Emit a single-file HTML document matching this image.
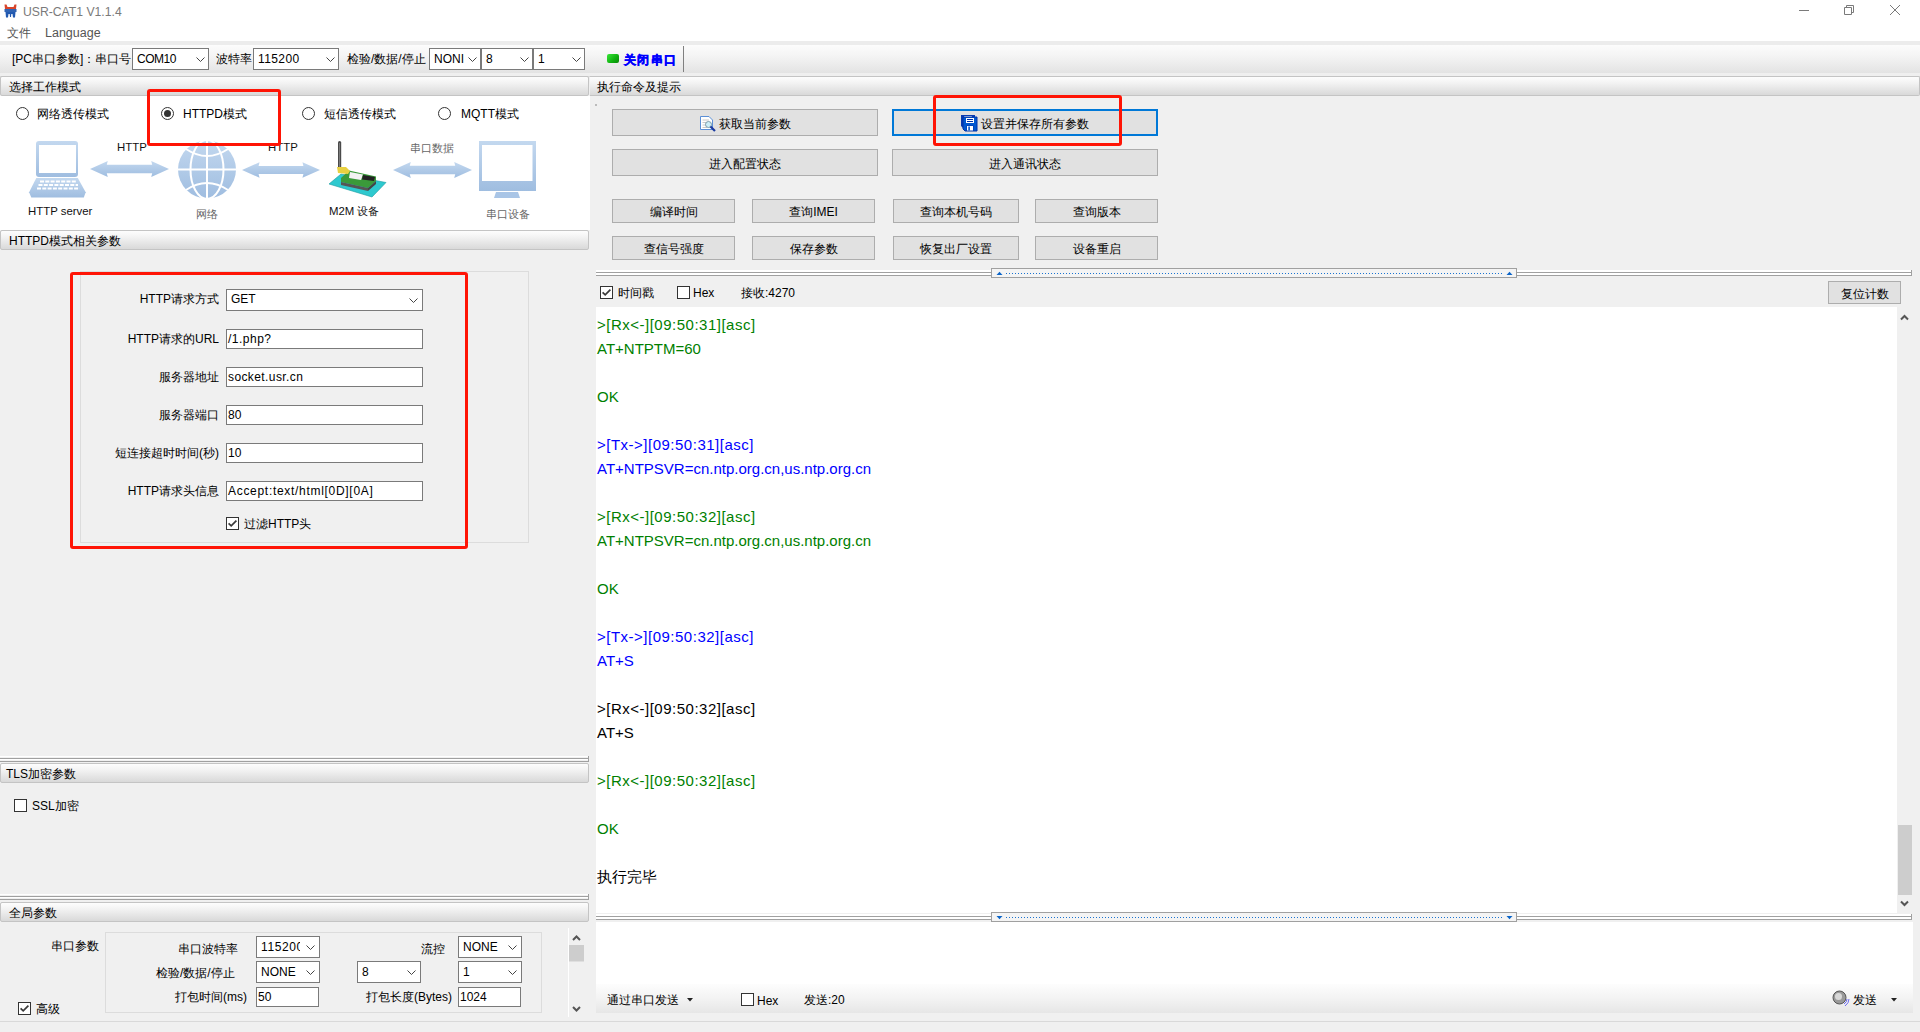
<!DOCTYPE html>
<html><head><meta charset="utf-8">
<style>
html,body{margin:0;padding:0;width:1920px;height:1032px;overflow:hidden;background:#f0f0f0;font-family:"Liberation Sans",sans-serif;}
.a{position:absolute;}
.t{position:absolute;font-size:12px;line-height:14px;white-space:nowrap;color:#000;}
.hdr{position:absolute;box-sizing:border-box;height:20px;border:1px solid #c4c4c4;border-radius:2px;background:linear-gradient(#fdfdfd,#f4f4f4 30%,#d9d9d9);}
.btn{position:absolute;box-sizing:border-box;border:1px solid #adadad;background:#e1e1e1;font-size:12px;line-height:14px;text-align:center;white-space:nowrap;}
.cb{position:absolute;box-sizing:border-box;border:1px solid #7a7a7a;background:#fff;}
.ip{position:absolute;box-sizing:border-box;border:1px solid #7a7a7a;background:#fff;}
.chk{position:absolute;box-sizing:border-box;width:13px;height:13px;border:1px solid #333;background:#fff;}
.rad{position:absolute;box-sizing:border-box;width:13px;height:13px;border:1.2px solid #333;border-radius:50%;background:#fff;}
.chev{position:absolute;width:9px;height:5px;}
.gb{position:absolute;box-sizing:border-box;border:1px solid #dcdcdc;}
.red{position:absolute;box-sizing:border-box;border:3px solid #ff1405;border-radius:3px;}
.log{position:absolute;left:597px;font-size:15px;line-height:24px;white-space:nowrap;}
</style></head><body>
<!-- title + menu -->
<div class="a" style="left:0;top:0;width:1920px;height:41px;background:#fff"></div>
<div class="a" style="left:0;top:41px;width:1920px;height:4px;background:#ececec"></div>
<!-- toolbar -->
<div class="a" style="left:0;top:45px;width:1920px;height:31px;background:#efefef"></div><div class="a" style="left:0;top:45px;width:1920px;height:28px;background:linear-gradient(#fcfcfc,#f4f4f4 40%,#e3e3e3)"></div>
<div class="a" style="left:0;top:76px;width:1920px;height:1px;background:#d8d8d8"></div>

<!-- title bar -->
<svg class="a" style="left:4px;top:4px" width="13" height="14" viewBox="0 0 13 14">
<path d="M0.5 0.5 L2.5 0.5 L3.5 3 L9.5 3 L10.5 0.5 L12.5 0.5 L12 5 L1 5 Z" fill="#d9452a"/>
<rect x="0.5" y="5" width="12" height="3" fill="#2f63b3"/>
<path d="M1.5 8 L11.5 8 L11 13.5 L9 13.5 L8.5 10 L7.3 10 L7 13 L6 13 L5.7 10 L4.5 10 L4 13.5 L2 13.5 Z" fill="#2259b0"/>
</svg>
<div class="t" style="left:23px;top:5px;font-size:12.2px;color:#7a7a7a">USR-CAT1 V1.1.4</div>
<div class="a" style="left:1799px;top:10px;width:10px;height:1px;background:#7a7a7a"></div>
<svg class="a" style="left:1844px;top:5px" width="10" height="10" viewBox="0 0 10 10"><path d="M0.5 2.5 H7.5 V9.5 H0.5 Z M2.5 2.5 V0.5 H9.5 V7.5 H7.5" fill="none" stroke="#7a7a7a"/></svg>
<svg class="a" style="left:1889px;top:4px" width="12" height="12" viewBox="0 0 12 12"><path d="M1 1 L11 11 M11 1 L1 11" stroke="#7a7a7a" stroke-width="1"/></svg>
<div class="t" style="left:7px;top:26px;color:#555">文件</div>
<div class="t" style="left:45px;top:26px;font-size:12.5px;color:#555">Language</div>
<!-- toolbar content -->
<div class="t" style="left:12px;top:52px">[PC串口参数]：串口号</div>
<div class="cb" style="left:132px;top:48px;width:77px;height:22px"></div>
<div class="t" style="left:137px;top:52px;color:#000;letter-spacing:-0.5px">COM10</div>
<div class="t" style="left:216px;top:52px">波特率</div>
<div class="cb" style="left:253px;top:48px;width:86px;height:22px"></div>
<div class="t" style="left:258px;top:52px;letter-spacing:0.4px">115200</div>
<div class="t" style="left:347px;top:52px">检验/数据/停止</div>
<div class="cb" style="left:429px;top:48px;width:52px;height:22px"></div>
<div class="t" style="left:434px;top:52px">NONI</div>
<div class="cb" style="left:481px;top:48px;width:52px;height:22px"></div>
<div class="t" style="left:486px;top:52px">8</div>
<div class="cb" style="left:533px;top:48px;width:52px;height:22px"></div>
<div class="t" style="left:538px;top:52px">1</div>
<div class="a" style="left:607px;top:54px;width:12px;height:9px;border-radius:2px;background:linear-gradient(135deg,#39e639,#0fb00f 60%,#0a8a0a)"></div>
<div class="t" style="left:624px;top:53px;color:#0000ff;font-weight:bold;letter-spacing:1.3px;-webkit-text-stroke:0.5px #0000ff">关闭串口</div>
<div class="a" style="left:683px;top:46px;width:1px;height:26px;background:#808080"></div>
<svg class="a" style="left:196px;top:57px" width="9" height="5" viewBox="0 0 9 5"><path d="M0.5 0.5 L4.5 4.5 L8.5 0.5" fill="none" stroke="#444" stroke-width="1"/></svg><svg class="a" style="left:326px;top:57px" width="9" height="5" viewBox="0 0 9 5"><path d="M0.5 0.5 L4.5 4.5 L8.5 0.5" fill="none" stroke="#444" stroke-width="1"/></svg><svg class="a" style="left:468px;top:57px" width="9" height="5" viewBox="0 0 9 5"><path d="M0.5 0.5 L4.5 4.5 L8.5 0.5" fill="none" stroke="#444" stroke-width="1"/></svg><svg class="a" style="left:520px;top:57px" width="9" height="5" viewBox="0 0 9 5"><path d="M0.5 0.5 L4.5 4.5 L8.5 0.5" fill="none" stroke="#444" stroke-width="1"/></svg><svg class="a" style="left:572px;top:57px" width="9" height="5" viewBox="0 0 9 5"><path d="M0.5 0.5 L4.5 4.5 L8.5 0.5" fill="none" stroke="#444" stroke-width="1"/></svg>
<!-- LEFT PANEL -->
<div class="hdr" style="left:0;top:76px;width:589px"></div>
<div class="t" style="left:9px;top:80px">选择工作模式</div>
<div class="a" style="left:0;top:96px;width:590px;height:134px;background:#fff"></div>
<div class="rad" style="left:16px;top:107px"></div>
<div class="t" style="left:37px;top:107px">网络透传模式</div>
<div class="rad" style="left:161px;top:107px"></div>
<div class="a" style="left:164px;top:110px;width:7px;height:7px;border-radius:50%;background:#333"></div>
<div class="t" style="left:183px;top:107px">HTTPD模式</div>
<div class="rad" style="left:302px;top:107px"></div>
<div class="t" style="left:324px;top:107px">短信透传模式</div>
<div class="rad" style="left:438px;top:107px"></div>
<div class="t" style="left:461px;top:107px">MQTT模式</div>
<!-- diagram -->
<svg class="a" style="left:0;top:96px" width="589" height="134" viewBox="0 96 589 134">
<defs>
<linearGradient id="lb" x1="0" y1="0" x2="0" y2="1"><stop offset="0" stop-color="#c3d8ef"/><stop offset="1" stop-color="#9fbde0"/></linearGradient>
<symbol id="arr" viewBox="0 0 80 16"><path d="M0 8 L18 0 L17 3.8 L63 3.8 L62 0 L80 8 L62 16 L63 12.2 L17 12.2 L18 16 Z"/></symbol>
</defs>
<!-- laptop -->
<rect x="36" y="141" width="42" height="36" rx="3" fill="url(#lb)"/>
<rect x="39" y="145" width="37" height="28" fill="#fff"/>
<path d="M36.3 178 L77.8 178 L85.7 192.2 L83.8 197.6 L31.3 197.6 L29.1 192.2 Z" fill="url(#lb)"/>
<g stroke="#fff" stroke-width="1.8" stroke-dasharray="4 1.3"><line x1="40" y1="181.5" x2="76" y2="181.5"/><line x1="38.5" y1="185" x2="78" y2="185"/><line x1="37" y1="188.5" x2="79.5" y2="188.5"/></g><rect x="46" y="177" width="22" height="1" fill="#fff"/>
<use href="#arr" x="90" y="161" width="79" height="16" fill="url(#lb)"/>
<!-- globe -->
<circle cx="207" cy="169.5" r="29" fill="url(#lb)"/>
<g fill="none" stroke="#fff" stroke-width="2">
<line x1="207" y1="140" x2="207" y2="199"/><line x1="178" y1="169.5" x2="236" y2="169.5"/>
<ellipse cx="207" cy="169.5" rx="16.5" ry="29.5"/>
<path d="M186 149 Q207 163 228 149"/><path d="M186 190 Q207 176 228 190"/>
</g>
<use href="#arr" x="242" y="162" width="78" height="16" fill="url(#lb)"/>
<!-- device -->
<path d="M329 184 L341 174 L386 182.5 L372 197 Z" fill="#2ec9cf" stroke="#1a9aa0" stroke-width="0.6"/>
<path d="M341 178 L349 170.5 L376 176.5 L376 181 L368 188 L341 182 Z" fill="#3a9a3a"/>
<path d="M341 182 L368 188 L368 191 L341 185 Z" fill="#555"/>
<path d="M368 188 L376 181 L376 184 L368 191 Z" fill="#444"/>
<path d="M350 172 L363 174.5 L361 180 L349 178 Z" fill="#f2f2f2"/>
<path d="M363 175 L375 177 L374 181 L362 179.5 Z" fill="#222"/>
<rect x="338" y="141" width="3.2" height="29" rx="1.6" fill="#4a4a4a"/><rect x="339.2" y="143" width="0.8" height="25" fill="#888"/>
<path d="M337 167 L346 167 L350 171 L348 174 L338 173 Z" fill="#e8d040"/>
<use href="#arr" x="393" y="162" width="79" height="16" fill="url(#lb)"/>
<!-- monitor -->
<rect x="479" y="141" width="57" height="50" fill="url(#lb)"/>
<rect x="482" y="145" width="50.5" height="36" fill="#fff"/>
<path d="M496 192 L518 192 L520 198 L494 198 Z" fill="#a9c5e6"/>
</svg>
<div class="t" style="left:117px;top:140px;font-size:11.4px;color:#111">HTTP</div>
<div class="t" style="left:268px;top:140px;font-size:11.4px;color:#111">HTTP</div>
<div class="t" style="left:410px;top:141px;font-size:11px;color:#666">串口数据</div>
<div class="t" style="left:28px;top:204px;font-size:11.4px;color:#111">HTTP server</div>
<div class="t" style="left:196px;top:207px;font-size:11px;color:#666">网络</div>
<div class="t" style="left:329px;top:204px;font-size:11.4px;color:#111">M2M 设备</div>
<div class="t" style="left:486px;top:207px;font-size:11px;color:#666">串口设备</div>
<div class="red" style="left:147px;top:89px;width:134px;height:57px"></div>
<!-- HTTPD params -->
<div class="hdr" style="left:0;top:230px;width:589px"></div>
<div class="t" style="left:9px;top:234px">HTTPD模式相关参数</div>
<div class="gb" style="left:80px;top:271px;width:449px;height:272px"></div>
<div class="t" style="right:1701px;top:292px">HTTP请求方式</div>
<div class="cb" style="left:226px;top:289px;width:197px;height:22px"></div>
<div class="t" style="left:231px;top:292px">GET</div>
<svg class="a" style="left:409px;top:298px" width="9" height="5" viewBox="0 0 9 5"><path d="M0.5 0.5 L4.5 4.5 L8.5 0.5" fill="none" stroke="#444" stroke-width="1"/></svg><div class="t" style="right:1701px;top:332px">HTTP请求的URL</div>
<div class="ip" style="left:226px;top:329px;width:197px;height:20px"></div>
<div class="t" style="left:228px;top:332px;letter-spacing:0.5px">/1.php?</div>
<div class="t" style="right:1701px;top:370px">服务器地址</div>
<div class="ip" style="left:226px;top:367px;width:197px;height:20px"></div>
<div class="t" style="left:228px;top:370px;letter-spacing:0.4px">socket.usr.cn</div>
<div class="t" style="right:1701px;top:408px">服务器端口</div>
<div class="ip" style="left:226px;top:405px;width:197px;height:20px"></div>
<div class="t" style="left:228px;top:408px">80</div>
<div class="t" style="right:1701px;top:446px">短连接超时时间(秒)</div>
<div class="ip" style="left:226px;top:443px;width:197px;height:20px"></div>
<div class="t" style="left:228px;top:446px">10</div>
<div class="t" style="right:1701px;top:484px">HTTP请求头信息</div>
<div class="ip" style="left:226px;top:481px;width:197px;height:20px"></div>
<div class="t" style="left:228px;top:484px;letter-spacing:0.7px">Accept:text/html[0D][0A]</div>

<div class="chk" style="left:226px;top:517px"></div>
<svg class="a" style="left:226px;top:517px" width="13" height="13"><path d="M2.6 6.3 L5.2 8.9 L10.4 3.6" fill="none" stroke="#3a3a3a" stroke-width="1.7"/></svg>
<div class="t" style="left:244px;top:517px">过滤HTTP头</div>
<div class="red" style="left:70px;top:272px;width:398px;height:277px"></div>
<!-- splitter 1 -->
<div class="a" style="left:0;top:756px;width:589px;height:1px;background:#fff"></div>
<div class="a" style="left:0;top:758px;width:589px;height:1px;background:#a0a0a0"></div>
<div class="a" style="left:0;top:759px;width:589px;height:1px;background:#fff"></div>
<div class="a" style="left:0;top:761px;width:589px;height:1px;background:#a0a0a0"></div>
<div class="a" style="left:588px;top:756px;width:1px;height:6px;background:#a0a0a0"></div>
<div class="hdr" style="left:0;top:763px;width:589px"></div>
<div class="t" style="left:6px;top:767px">TLS加密参数</div>
<div class="chk" style="left:14px;top:799px"></div>
<div class="t" style="left:32px;top:799px">SSL加密</div>
<!-- splitter 2 -->
<div class="a" style="left:0;top:894px;width:589px;height:1px;background:#fff"></div>
<div class="a" style="left:0;top:896px;width:589px;height:1px;background:#a0a0a0"></div>
<div class="a" style="left:0;top:897px;width:589px;height:1px;background:#fff"></div>
<div class="a" style="left:0;top:899px;width:589px;height:1px;background:#a0a0a0"></div>
<div class="a" style="left:588px;top:894px;width:1px;height:6px;background:#a0a0a0"></div>
<div class="hdr" style="left:0;top:902px;width:589px"></div>
<div class="t" style="left:9px;top:906px">全局参数</div>
<div class="t" style="left:51px;top:939px">串口参数</div>
<div class="gb" style="left:105px;top:932px;width:437px;height:81px"></div>
<div class="t" style="left:178px;top:942px">串口波特率</div>
<div class="cb" style="left:256px;top:936px;width:64px;height:22px"></div>
<div class="a" style="left:257px;top:937px;width:43px;height:20px;overflow:hidden"><div class="t" style="left:4px;top:3px;letter-spacing:0.6px">115200</div></div>
<div class="t" style="left:421px;top:942px">流控</div>
<div class="cb" style="left:458px;top:936px;width:64px;height:22px"></div>
<div class="t" style="left:463px;top:940px">NONE</div>
<div class="t" style="left:156px;top:966px">检验/数据/停止</div>
<div class="cb" style="left:256px;top:961px;width:64px;height:22px"></div>
<div class="t" style="left:261px;top:965px">NONE</div>
<div class="cb" style="left:357px;top:961px;width:64px;height:22px"></div>
<div class="t" style="left:362px;top:965px">8</div>
<div class="cb" style="left:458px;top:961px;width:64px;height:22px"></div>
<div class="t" style="left:463px;top:965px">1</div>
<div class="t" style="left:175px;top:990px">打包时间(ms)</div>
<div class="ip" style="left:256px;top:987px;width:63px;height:20px"></div>
<div class="t" style="left:258px;top:990px">50</div>
<div class="t" style="left:366px;top:990px">打包长度(Bytes)</div>
<div class="ip" style="left:458px;top:987px;width:63px;height:20px"></div>
<div class="t" style="left:460px;top:990px">1024</div>
<div class="chk" style="left:18px;top:1002px"></div>
<svg class="a" style="left:18px;top:1002px" width="13" height="13"><path d="M2.6 6.3 L5.2 8.9 L10.4 3.6" fill="none" stroke="#3a3a3a" stroke-width="1.7"/></svg>
<div class="t" style="left:36px;top:1002px">高级</div>
<svg class="a" style="left:306px;top:945px" width="9" height="5" viewBox="0 0 9 5"><path d="M0.5 0.5 L4.5 4.5 L8.5 0.5" fill="none" stroke="#444" stroke-width="1"/></svg><svg class="a" style="left:508px;top:945px" width="9" height="5" viewBox="0 0 9 5"><path d="M0.5 0.5 L4.5 4.5 L8.5 0.5" fill="none" stroke="#444" stroke-width="1"/></svg><svg class="a" style="left:306px;top:970px" width="9" height="5" viewBox="0 0 9 5"><path d="M0.5 0.5 L4.5 4.5 L8.5 0.5" fill="none" stroke="#444" stroke-width="1"/></svg><svg class="a" style="left:407px;top:970px" width="9" height="5" viewBox="0 0 9 5"><path d="M0.5 0.5 L4.5 4.5 L8.5 0.5" fill="none" stroke="#444" stroke-width="1"/></svg><svg class="a" style="left:508px;top:970px" width="9" height="5" viewBox="0 0 9 5"><path d="M0.5 0.5 L4.5 4.5 L8.5 0.5" fill="none" stroke="#444" stroke-width="1"/></svg>
<div class="a" style="left:568px;top:928px;width:1px;height:89px;background:#fff"></div><svg class="a" style="left:568px;top:928px" width="17" height="89"><path d="M5 12 L8.5 8.5 L12 12" fill="none" stroke="#555" stroke-width="2"/><rect x="1" y="17" width="15" height="16.5" fill="#cdcdcd"/><path d="M5 79 L8.5 82.5 L12 79" fill="none" stroke="#555" stroke-width="2"/></svg>
<div class="a" style="left:0;top:1021px;width:1920px;height:1px;background:#d9d9d9"></div>

<!-- RIGHT PANEL -->
<div class="hdr" style="left:590px;top:76px;width:1330px;border-left:none;border-radius:0 2px 2px 0"></div>
<div class="t" style="left:597px;top:80px">执行命令及提示</div>

<div class="btn" style="left:612px;top:109px;width:266px;height:27px"></div>
<svg class="a" style="left:700px;top:116px" width="16" height="16" viewBox="0 0 16 16">
<path d="M0.5 0.5 L9 0.5 L12.5 4 L12.5 13.5 L0.5 13.5 Z" fill="#fff" stroke="#5b8fd6"/>
<g stroke="#c8c8c8"><line x1="2.5" y1="4" x2="9" y2="4"/><line x1="2.5" y1="6.5" x2="10" y2="6.5"/><line x1="2.5" y1="9" x2="6" y2="9"/><line x1="2.5" y1="11.5" x2="7" y2="11.5"/></g>
<circle cx="8.5" cy="8.5" r="3" fill="#cdeef7" stroke="#7a9aa8"/>
<path d="M10.5 10.5 L15 15" stroke="#1a3aa0" stroke-width="2.2"/>
</svg>
<div class="t" style="left:719px;top:117px">获取当前参数</div>
<div class="btn" style="left:892px;top:109px;width:266px;height:27px;border:2px solid #0078d7"></div>
<svg class="a" style="left:960px;top:114px" width="18" height="18" viewBox="0 0 18 18">
<path d="M1 1 H15 V14 H3 L1 12 Z" fill="#0a3cb0"/>
<rect x="4" y="2" width="8" height="1.5" rx="0.7" fill="#fff"/>
<path d="M3 3 H17 V17 H5 L3 15 Z" fill="#0058d0" stroke="#0032a8" stroke-width="1"/>
<rect x="6" y="4" width="8" height="5" fill="#fff"/>
<rect x="7" y="5" width="6" height="1" fill="#0032a8"/><rect x="7" y="7" width="6" height="1" fill="#0032a8"/>
<rect x="6.5" y="11.5" width="7" height="5" fill="#0032a8"/>
<rect x="7" y="12" width="6" height="4.5" fill="#fff"/><rect x="8.3" y="12.5" width="1.6" height="4" fill="#0050c8"/>
</svg>
<div class="t" style="left:981px;top:117px">设置并保存所有参数</div>
<div class="btn" style="left:612px;top:149px;width:266px;height:27px"></div>
<div class="t" style="left:709px;top:157px">进入配置状态</div>
<div class="btn" style="left:892px;top:149px;width:266px;height:27px"></div>
<div class="t" style="left:989px;top:157px">进入通讯状态</div>
<div class="red" style="left:933px;top:95px;width:189px;height:51px"></div>
<div class="btn" style="left:612px;top:199px;width:123px;height:24px;line-height:24px">编译时间</div>
<div class="btn" style="left:752px;top:199px;width:123px;height:24px;line-height:24px">查询IMEI</div>
<div class="btn" style="left:893px;top:199px;width:126px;height:24px;line-height:24px">查询本机号码</div>
<div class="btn" style="left:1035px;top:199px;width:123px;height:24px;line-height:24px">查询版本</div>
<div class="btn" style="left:612px;top:236px;width:123px;height:24px;line-height:24px">查信号强度</div>
<div class="btn" style="left:752px;top:236px;width:123px;height:24px;line-height:24px">保存参数</div>
<div class="btn" style="left:893px;top:236px;width:126px;height:24px;line-height:24px">恢复出厂设置</div>
<div class="btn" style="left:1035px;top:236px;width:123px;height:24px;line-height:24px">设备重启</div>

<!-- splitter top -->
<div class="a" style="left:596px;top:270px;width:1316px;height:2px;background:#fff"></div>
<div class="a" style="left:596px;top:272px;width:1316px;height:1px;background:#a0a0a0"></div>
<div class="a" style="left:596px;top:273px;width:1316px;height:2px;background:#fff"></div>
<div class="a" style="left:596px;top:275px;width:1316px;height:1px;background:#a0a0a0"></div>
<div class="a" style="left:1911px;top:270px;width:1px;height:6px;background:#a0a0a0"></div>
<div class="a" style="left:991px;top:268px;width:526px;height:10px;box-sizing:border-box;border:1px solid #a0a0a0;background:#f4f4f4"></div>
<svg class="a" style="left:996px;top:271px" width="7" height="5"><path d="M0.5 4 L3.5 0.8 L6.5 4 Z" fill="#0a64c8"/></svg>
<div class="a" style="left:1006px;top:273px;width:498px;height:1px;background:repeating-linear-gradient(90deg,#1a73d0 0 1px,transparent 1px 3px)"></div>
<svg class="a" style="left:1506px;top:271px" width="7" height="5"><path d="M0.5 4 L3.5 0.8 L6.5 4 Z" fill="#0a64c8"/></svg>
<!-- checkbox row -->
<div class="chk" style="left:600px;top:286px"></div>
<svg class="a" style="left:600px;top:286px" width="13" height="13"><path d="M2.6 6.3 L5.2 8.9 L10.4 3.6" fill="none" stroke="#3a3a3a" stroke-width="1.7"/></svg>
<div class="t" style="left:618px;top:286px">时间戳</div>
<div class="chk" style="left:677px;top:286px"></div>
<div class="t" style="left:693px;top:286px">Hex</div>
<div class="t" style="left:741px;top:286px">接收:4270</div>
<div class="btn" style="left:1828px;top:281px;width:73px;height:23px;line-height:24px">复位计数</div>
<div class="a" style="left:595px;top:104px;width:2px;height:2px;background:#bbb"></div>
<!-- log area -->
<div class="a" style="left:596px;top:307px;width:1301px;height:606px;background:#fff"></div>
<div class="a" style="left:1897px;top:307px;width:15px;height:606px;background:#f0f0f0"></div>
<svg class="a" style="left:1897px;top:307px" width="15" height="606"><path d="M4 12.5 L7.5 9 L11 12.5" fill="none" stroke="#555" stroke-width="2"/><rect x="1" y="518" width="14" height="70" fill="#cdcdcd"/><path d="M4 594.5 L7.5 598 L11 594.5" fill="none" stroke="#555" stroke-width="2"/></svg>
<div class="log" style="top:313px;color:#008000;letter-spacing:0.5px">&gt;[Rx&lt;-][09:50:31][asc]</div>
<div class="log" style="top:337px;color:#008000">AT+NTPTM=60</div>
<div class="log" style="top:385px;color:#008000">OK</div>
<div class="log" style="top:433px;color:#0000ff;letter-spacing:0.5px">&gt;[Tx-&gt;][09:50:31][asc]</div>
<div class="log" style="top:457px;color:#0000ff">AT+NTPSVR=cn.ntp.org.cn,us.ntp.org.cn</div>
<div class="log" style="top:505px;color:#008000;letter-spacing:0.5px">&gt;[Rx&lt;-][09:50:32][asc]</div>
<div class="log" style="top:529px;color:#008000">AT+NTPSVR=cn.ntp.org.cn,us.ntp.org.cn</div>
<div class="log" style="top:577px;color:#008000">OK</div>
<div class="log" style="top:625px;color:#0000ff;letter-spacing:0.5px">&gt;[Tx-&gt;][09:50:32][asc]</div>
<div class="log" style="top:649px;color:#0000ff">AT+S</div>
<div class="log" style="top:697px;color:#000;letter-spacing:0.5px">&gt;[Rx&lt;-][09:50:32][asc]</div>
<div class="log" style="top:721px;color:#000">AT+S</div>
<div class="log" style="top:769px;color:#008000;letter-spacing:0.5px">&gt;[Rx&lt;-][09:50:32][asc]</div>
<div class="log" style="top:817px;color:#008000">OK</div>
<div class="log" style="top:865px;color:#000">执行完毕</div>

<!-- splitter bottom -->
<div class="a" style="left:596px;top:913px;width:1316px;height:9px;background:#f0f0f0"></div>
<div class="a" style="left:596px;top:914px;width:1316px;height:2px;background:#fff"></div>
<div class="a" style="left:596px;top:916px;width:1316px;height:1px;background:#a0a0a0"></div>
<div class="a" style="left:596px;top:917px;width:1316px;height:2px;background:#fff"></div>
<div class="a" style="left:596px;top:919px;width:1316px;height:1px;background:#a0a0a0"></div>
<div class="a" style="left:1911px;top:914px;width:1px;height:6px;background:#a0a0a0"></div>
<div class="a" style="left:991px;top:912px;width:526px;height:10px;box-sizing:border-box;border:1px solid #a0a0a0;background:#f4f4f4"></div>
<svg class="a" style="left:996px;top:915px" width="7" height="5"><path d="M0.5 1 L3.5 4.2 L6.5 1 Z" fill="#0a64c8"/></svg>
<div class="a" style="left:1006px;top:917px;width:498px;height:1px;background:repeating-linear-gradient(90deg,#1a73d0 0 1px,transparent 1px 3px)"></div>
<svg class="a" style="left:1506px;top:915px" width="7" height="5"><path d="M0.5 1 L3.5 4.2 L6.5 1 Z" fill="#0a64c8"/></svg>
<!-- send area -->
<div class="a" style="left:596px;top:922px;width:1317px;height:62px;background:#fff"></div>
<div class="a" style="left:596px;top:984px;width:1317px;height:29px;background:linear-gradient(#fdfdfd,#f3f3f3 50%,#e6e6e6)"></div>
<div class="t" style="left:607px;top:993px">通过串口发送</div>
<svg class="a" style="left:687px;top:998px" width="7" height="4"><path d="M0 0 L6 0 L3 3.5 Z" fill="#222"/></svg>
<div class="chk" style="left:741px;top:993px"></div>
<div class="t" style="left:757px;top:994px">Hex</div>
<div class="t" style="left:804px;top:993px">发送:20</div>
<svg class="a" style="left:1832px;top:990px" width="19" height="17" viewBox="0 0 19 17"><circle cx="7.5" cy="7.5" r="6.5" fill="#9a9a9a" stroke="#555"/><circle cx="6.5" cy="6.5" r="3.5" fill="#d8d8d8"/><path d="M12 14 Q15 12 15 9 M13 16 Q17 13 17 9" stroke="#6a6af0" fill="none"/></svg>
<div class="t" style="left:1853px;top:993px">发送</div>
<svg class="a" style="left:1891px;top:998px" width="7" height="4"><path d="M0 0 L6 0 L3 3.5 Z" fill="#222"/></svg>
</body></html>
